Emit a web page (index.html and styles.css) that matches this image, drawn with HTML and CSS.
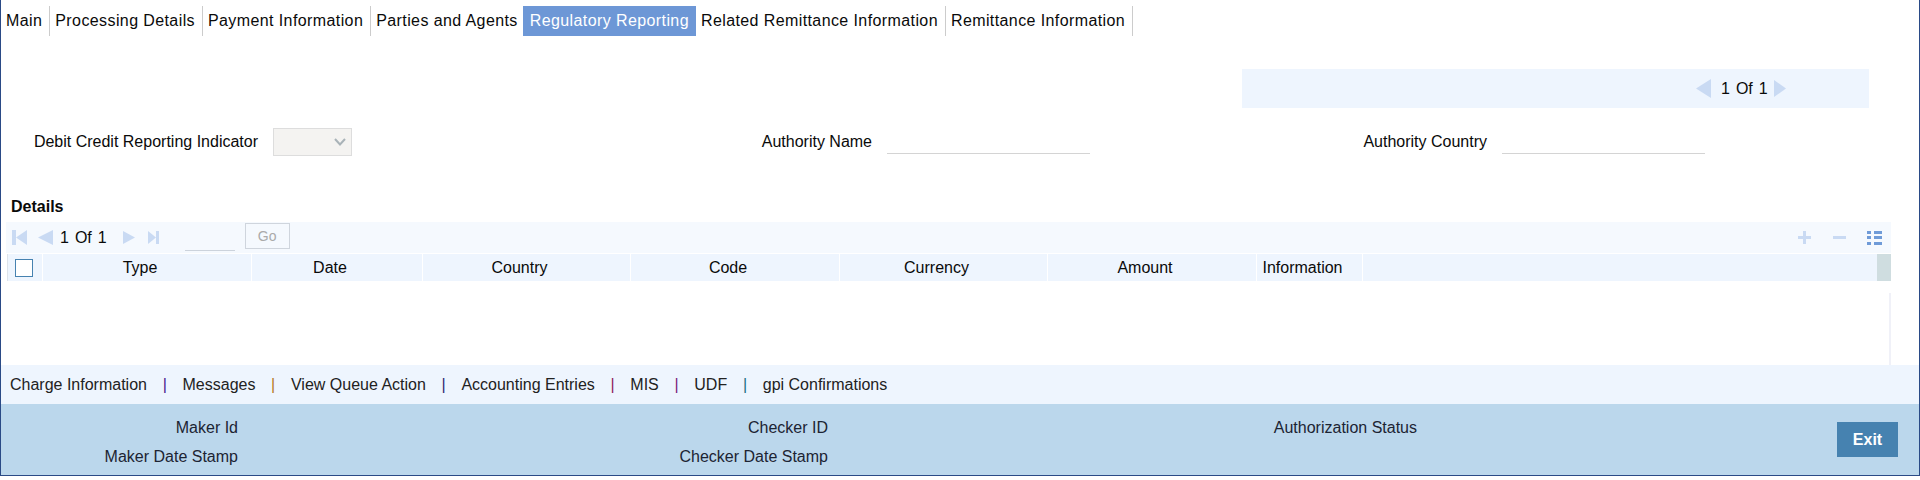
FILE: index.html
```html
<!DOCTYPE html>
<html lang="en">
<head>
<meta charset="utf-8">
<title>Regulatory Reporting</title>
<link rel="stylesheet" href="styles.css">
</head>
<body>
<div class="app">
  <nav class="tabs">
    <a class="tab">Main</a>
    <a class="tab">Processing Details</a>
    <a class="tab">Payment Information</a>
    <a class="tab tab-before-active">Parties and Agents</a>
    <a class="tab active">Regulatory Reporting</a>
    <a class="tab">Related Remittance Information</a>
    <a class="tab">Remittance Information</a>
  </nav>

  <div class="pager-band">
    <svg class="arrow-left" width="15" height="19" viewBox="0 0 15 19"><polygon points="0,9.5 15,0 15,19" fill="#c9daf3"/></svg>
    <span class="pager-text"><span>1</span><span>Of</span><span>1</span></span>
    <svg class="arrow-right" width="12" height="17" viewBox="0 0 12 17"><polygon points="12,8.5 0,0 0,17" fill="#c9daf3"/></svg>
  </div>

  <div class="form-row">
    <label class="lbl">Debit Credit Reporting Indicator</label>
    <div class="select">
      <svg width="12" height="8" viewBox="0 0 12 8"><polyline points="1,1 6,6.5 11,1" fill="none" stroke="#a9b3b8" stroke-width="2"/></svg>
    </div>
    <label class="lbl">Authority Name</label>
    <div class="line-input"></div>
    <label class="lbl">Authority Country</label>
    <div class="line-input"></div>
  </div>

  <section class="details">
    <h2 class="details-title">Details</h2>
    <div class="toolbar">
      <svg class="tb-first" width="15" height="15" viewBox="0 0 15 15"><rect x="0" y="0" width="4" height="15" fill="#c9daf3"/><polygon points="4,7.5 15,0 15,15" fill="#c9daf3"/></svg>
      <svg class="tb-prev" width="15" height="15" viewBox="0 0 15 15"><polygon points="0,7.5 15,0 15,15" fill="#c9daf3"/></svg>
      <span class="pager-text tb-text"><span>1</span><span>Of</span><span>1</span></span>
      <svg class="tb-next" width="12" height="15" viewBox="0 0 12 15"><polygon points="12,7.5 0,1 0,14" fill="#c9daf3"/></svg>
      <svg class="tb-last" width="11" height="13" viewBox="0 0 11 13"><polygon points="8,6.5 0,0 0,13" fill="#c9daf3"/><rect x="8" y="0" width="3" height="13" fill="#c9daf3"/></svg>
      <div class="tb-input"></div>
      <button class="go">Go</button>
      <div class="tb-actions">
        <svg width="13" height="13" viewBox="0 0 13 13"><rect x="5" y="0" width="3" height="13" fill="#c9daf3"/><rect x="0" y="5" width="13" height="3" fill="#c9daf3"/></svg>
        <svg width="13" height="13" viewBox="0 0 13 13"><rect x="0" y="5" width="13" height="3" fill="#c9daf3"/></svg>
        <svg width="15" height="15" viewBox="0 0 15 15"><g fill="#6f9bd8"><rect x="0" y="1" width="4" height="3"/><rect x="7" y="1" width="8" height="3"/><rect x="0" y="6" width="4" height="3"/><rect x="7" y="6" width="8" height="3"/><rect x="0" y="12" width="4" height="3"/><rect x="7" y="12" width="8" height="3"/></g></svg>
      </div>
    </div>
    <div class="thead">
      <div class="th th-check"><span class="checkbox"></span></div>
      <div class="th">Type</div>
      <div class="th">Date</div>
      <div class="th">Country</div>
      <div class="th">Code</div>
      <div class="th">Currency</div>
      <div class="th">Amount</div>
      <div class="th">Information</div>
      <div class="th th-fill"></div>
      <div class="th-scroll"></div>
    </div>
    <div class="tbody"></div>
  </section>

  <nav class="links">
    <a>Charge Information</a><i class="pipe p1">|</i>
    <a>Messages</a><i class="pipe p2">|</i>
    <a>View Queue Action</a><i class="pipe p3">|</i>
    <a>Accounting Entries</a><i class="pipe p4">|</i>
    <a>MIS</a><i class="pipe p5">|</i>
    <a>UDF</a><i class="pipe p6">|</i>
    <a>gpi Confirmations</a>
  </nav>

  <footer class="footer">
    <div class="f-lbl">Maker Id</div>
    <div class="f-lbl">Checker ID</div>
    <div class="f-lbl">Authorization Status</div>
    <button class="exit">Exit</button>
    <div class="f-lbl">Maker Date Stamp</div>
    <div class="f-lbl">Checker Date Stamp</div>
  </footer>
</div>
</body>
</html>
```
FILE: styles.css
```css
* { box-sizing: border-box; }
html, body { margin: 0; padding: 0; background: #fff; }
body { font-family: "Liberation Sans", Arial, sans-serif; font-size: 16px; color: #0a0a0a; }

.app {
  height: 476px;
  display: flex;
  flex-direction: column;
  border-left: 1px solid #2a4a86;
  border-right: 1px solid #2a4a86;
  border-bottom: 1px solid #2a4a86;
}

.tabs { display: flex; margin-top: 6px; height: 30px; }
.tab {
  display: flex;
  align-items: center;
  padding: 0 7px 0 5px;
  border-right: 1px solid #ccc;
  line-height: 30px;
  white-space: nowrap;
  letter-spacing: 0.4px;
}
.tab.tab-before-active { border-right: 0; padding-right: 5px; }
.tab.active { background: #6d97d6; color: #fff; border-right: 0; padding: 0 7px; }

.pager-band {
  display: flex;
  align-items: center;
  margin: 33px 0 0 1241px;
  width: 627px;
  height: 39px;
  background: #eef5fe;
  padding-left: 454px;
}
.arrow-left { margin-right: 10px; }
.arrow-right { margin-left: 6px; }
.pager-text { display: flex; gap: 6px; }

.form-row {
  display: grid;
  grid-template-columns: 257px 79px 505px 203px 382px 203px;
  column-gap: 15px;
  align-items: center;
  margin-top: 20px;
  height: 28px;
}
.lbl { text-align: right; white-space: nowrap; }
.select {
  height: 28px;
  background: #f4f3f1;
  border: 1px solid #ddd;
  display: flex;
  align-items: center;
  justify-content: flex-end;
  padding-right: 5px;
}
.line-input { height: 26px; border-bottom: 1px solid #d4d4d4; align-self: start; }

.details { flex: 1; min-height: 0; margin: 41px 28px 0 5px; display: flex; flex-direction: column; }
.details-title { margin: 1px 0 0 5px; height: 24px; line-height: 18px; font-size: 16px; font-weight: bold; }

.toolbar {
  display: flex;
  align-items: center;
  height: 31px;
  background: #f5f9fe;
}
.tb-first { margin-left: 6px; }
.tb-prev { margin-left: 11px; }
.tb-text { margin-left: 7px; }
.tb-next { margin-left: 16px; }
.tb-last { margin-left: 13px; }
.tb-input { width: 50px; height: 26px; margin-left: 26px; border-bottom: 1px solid #ccd3dc; }
.go {
  width: 45px;
  height: 26px;
  margin-left: 10px;
  margin-top: -4px;
  border: 1px solid #cfd5dd;
  background: #f5f9fe;
  color: #aaa;
  font: 14px "Liberation Sans", Arial, sans-serif;
  padding: 0;
}
.tb-actions { margin-left: auto; margin-right: 9px; display: flex; align-items: center; gap: 22px; }
.tb-actions svg:last-child { margin-left: -1px; }

.thead {
  display: grid;
  grid-template-columns: 37px 209px 171px 208px 209px 208px 209px 106px 1fr 14px;
  margin-top: 1px;
  height: 27px;
}
.th {
  background: #eef5fe;
  border-right: 1px solid #fff;
  display: flex;
  align-items: center;
  justify-content: center;
  padding-right: 14px;
  white-space: nowrap;
}
.th-check { border-left: 1px solid #dde3ea; margin-left: 1px; justify-content: flex-start; padding: 0 0 0 7px; }
.th-fill { border-right: 0; padding: 0; }
.th-scroll { background: #cfdde0; }
.checkbox { width: 18px; height: 18px; background: #fff; border: 1px solid #4682b0; }

.tbody { flex: 1; margin-top: 12px; border-right: 2px solid #f0f1f8; }

.links {
  display: flex;
  align-items: center;
  height: 39px;
  background: #eef5fe;
  padding-left: 9px;
  color: #222;
  white-space: nowrap;
}
.pipe { font-style: normal; margin: 0 15.7px; }
.p1 { color: #4b1a8c; }
.p2 { color: #b5791a; }
.p3 { color: #2f2a70; }
.p4 { color: #8e1a5a; }
.p5 { color: #7a1a7a; }
.p6 { color: #1a6f80; }

.footer {
  height: 71px;
  flex: none;
  background: #bbd7ec;
  display: grid;
  grid-template-columns: 237px 590px 589px 1fr;
  grid-template-rows: 28px 29px;
  padding-top: 10px;
  align-items: center;
  color: #1c2433;
}
.f-lbl { text-align: right; white-space: nowrap; }
.exit {
  grid-column: 4;
  grid-row: 1 / span 2;
  justify-self: end;
  align-self: start;
  margin: 8px 21px 0 0;
  width: 61px;
  height: 35px;
  border: 0;
  background: #4682b0;
  color: #fff;
  font: bold 16px "Liberation Sans", Arial, sans-serif;
  padding: 0;
}
```
